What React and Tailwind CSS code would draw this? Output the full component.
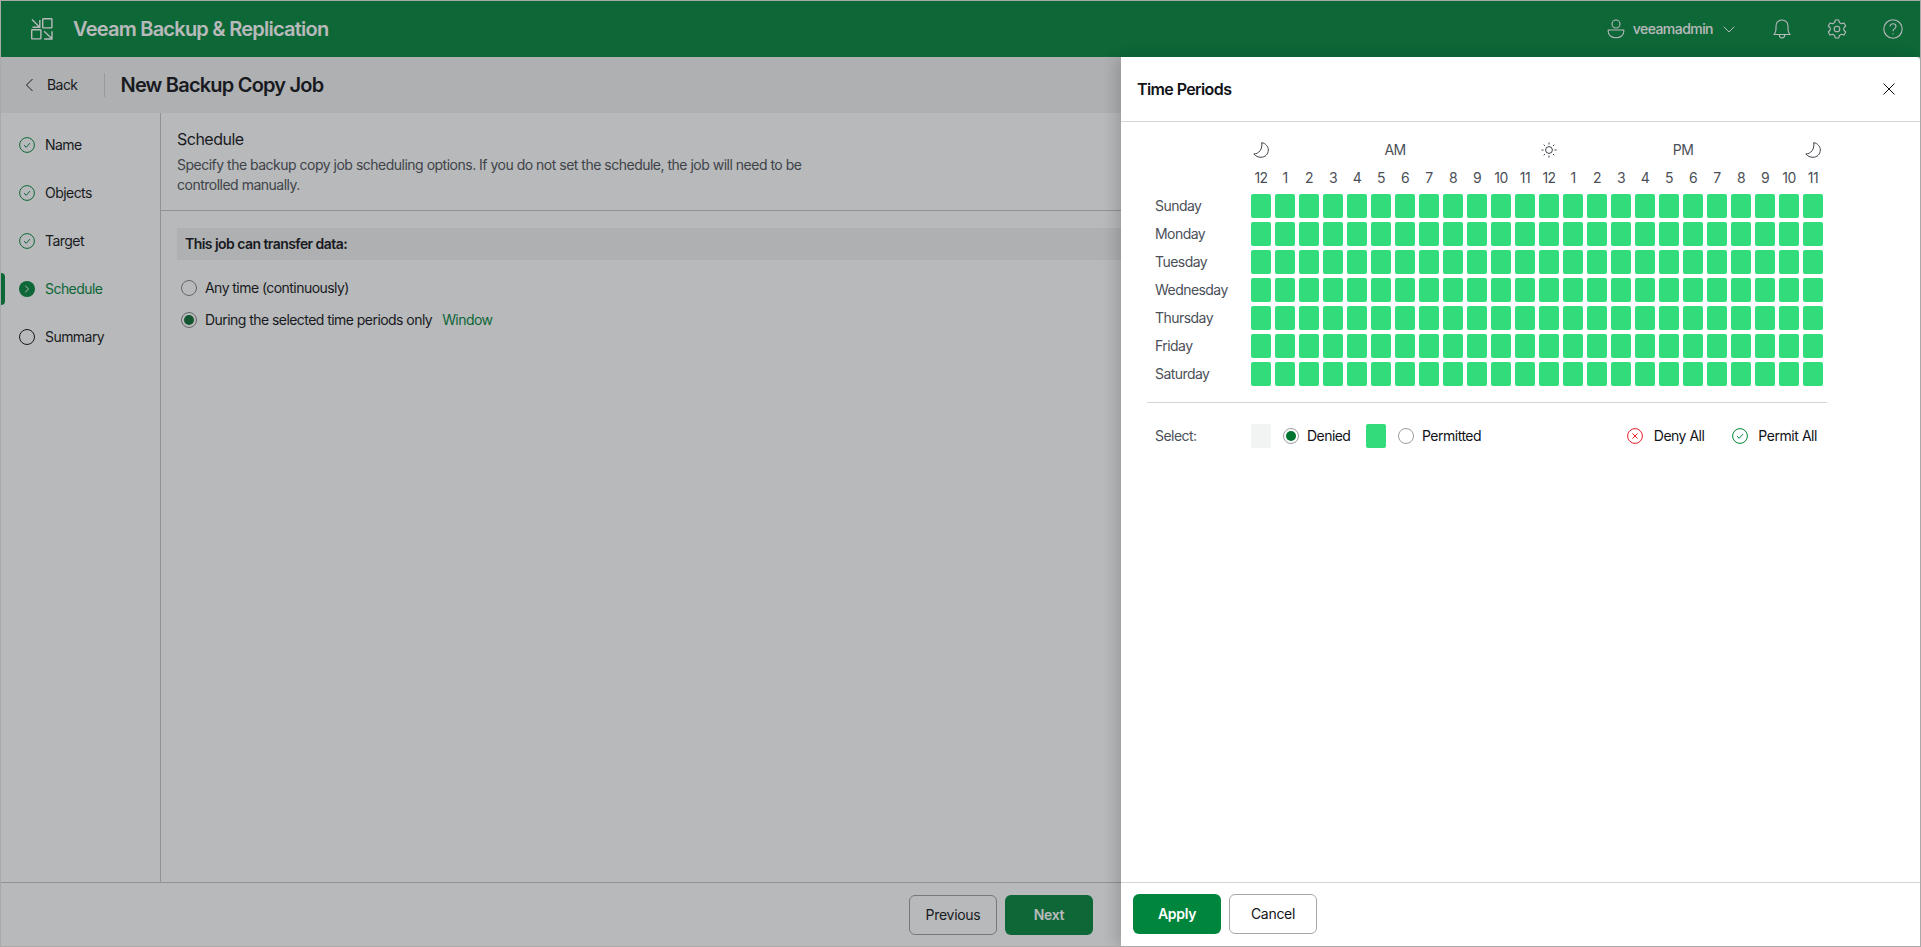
import React from "react";

const hours = [12, 1, 2, 3, 4, 5, 6, 7, 8, 9, 10, 11, 12, 1, 2, 3, 4, 5, 6, 7, 8, 9, 10, 11];
const days = ["Sunday", "Monday", "Tuesday", "Wednesday", "Thursday", "Friday", "Saturday"];

function Logo() {
  return (
    <svg width="24" height="24" viewBox="0 0 24 24" fill="none" stroke="currentColor" strokeWidth="1.4" className="text-white">
      <rect x="12.7" y="1.7" width="9.2" height="9.2" rx="0.6" />
      <rect x="1.7" y="12.7" width="9.2" height="9.2" rx="0.6" />
      <path d="M2 2.5 L9.4 9.9 M2.5 10.2 H9.8 V3" />
      <path d="M14.2 14.2 L21.8 21.8 M14.2 22 H22 V14.2" />
    </svg>
  );
}
function UserIcon() {
  return (
    <svg width="18" height="20" viewBox="0 0 18 20" fill="none" stroke="currentColor" strokeWidth="1.1">
      <circle cx="9" cy="5" r="4" />
      <path d="M1.2 11 H16.8 V12.5 C16.8 16 13.5 18.8 9 18.8 C4.5 18.8 1.2 16 1.2 12.5 Z" strokeLinejoin="round" />
    </svg>
  );
}
function Chevron() {
  return (
    <svg width="12" height="7" viewBox="0 0 12 7" fill="none" stroke="currentColor" strokeWidth="1">
      <path d="M0.7 0.7 L6 6 L11.3 0.7" />
    </svg>
  );
}
function Bell() {
  return (
    <svg width="18" height="20" viewBox="0 0 18 20" fill="none" stroke="currentColor" strokeWidth="1.1">
      <path d="M1 15.5 C2.6 14 3 12.5 3 10 V7 C3 3.6 5.6 1 9 1 C12.4 1 15 3.6 15 7 V10 C15 12.5 15.4 14 17 15.5 Z" strokeLinejoin="round" />
      <path d="M6.3 15.8 C6.3 17.6 7.4 19 9 19 C10.6 19 11.7 17.6 11.7 15.8" />
    </svg>
  );
}
function Gear() {
  return (
    <svg width="20" height="20" viewBox="0 0 20 20" fill="none" stroke="currentColor" strokeWidth="1.1" strokeLinejoin="round">
      <path d="M8.2 1 H11.8 L12.4 3.6 L14.4 4.7 L16.9 3.9 L18.7 7 L16.8 8.8 V11.2 L18.7 13 L16.9 16.1 L14.4 15.3 L12.4 16.4 L11.8 19 H8.2 L7.6 16.4 L5.6 15.3 L3.1 16.1 L1.3 13 L3.2 11.2 V8.8 L1.3 7 L3.1 3.9 L5.6 4.7 L7.6 3.6 Z" />
      <circle cx="10" cy="10" r="2.8" />
    </svg>
  );
}
function Help() {
  return (
    <svg width="20" height="20" viewBox="0 0 20 20" fill="none" stroke="currentColor" strokeWidth="1.1">
      <circle cx="10" cy="10" r="9.2" />
      <path d="M7 7.6 C7 5.9 8.3 4.8 10 4.8 C11.7 4.8 13 5.9 13 7.4 C13 9.6 10 9.6 10 12.2" />
      <circle cx="10" cy="14.9" r="0.7" fill="currentColor" stroke="none" />
    </svg>
  );
}
function Done() {
  return (
    <svg width="16" height="16" viewBox="0 0 16 16" fill="none">
      <circle cx="8" cy="8" r="7.4" stroke="#00853d" strokeWidth="1" />
      <path d="M5 8.2 L7.2 10.3 L11 6.1" stroke="#00853d" strokeWidth="1" />
    </svg>
  );
}
function Moon() {
  return (
    <svg width="16" height="16" viewBox="0 0 16 16" fill="none" stroke="#3f444b" strokeWidth="1" strokeLinejoin="round">
      <path d="M8.7 0.7 C12.6 1.3 15.3 4.3 15.3 8 C15.3 12.2 12 15.3 8 15.3 C5.3 15.3 2.6 14.2 0.8 11.9 C5.7 12.3 9.9 6.7 8.7 0.7 Z" />
    </svg>
  );
}
function Sun() {
  return (
    <svg width="16" height="16" viewBox="0 0 16 16" fill="none" stroke="#3f444b" strokeWidth="1">
      <circle cx="8" cy="8" r="3.4" />
      <path d="M8 0.5 V2.5 M8 13.5 V15.5 M0.5 8 H2.5 M13.5 8 H15.5 M2.7 2.7 L4 4 M12 12 L13.3 13.3 M2.7 13.3 L4 12 M12 4 L13.3 2.7" />
    </svg>
  );
}
function Radio({ checked, color = "#0b6b33", ring = "#80848a" }) {
  return (
    <span className="flex h-4 w-4 shrink-0 items-center justify-center rounded-full border bg-transparent" style={{ borderColor: ring }}>
      {checked && <span className="h-[10px] w-[10px] rounded-full" style={{ background: color }} />}
    </span>
  );
}
function Step({ label, state }) {
  return (
    <div className="relative flex h-12 items-center gap-[10px] pl-[18px]">
      {state === "active" && <span className="absolute left-0 top-2 h-8 w-1 rounded-r-sm bg-[#00853d]" />}
      {state === "done" && <Done />}
      {state === "active" && (
        <span className="flex h-4 w-4 items-center justify-center rounded-full bg-[#00853d]">
          <svg width="6" height="8" viewBox="0 0 6 8" fill="none" stroke="#fff" strokeWidth="1">
            <path d="M1.3 0.8 L4.6 4 L1.3 7.2" />
          </svg>
        </span>
      )}
      {state === "todo" && <span className="h-4 w-4 rounded-full border border-[#111318]" />}
      <span className={state === "active" ? "text-[#00853d]" : "text-[#111318]"}>{label}</span>
    </div>
  );
}

export default function App() {
  return (
    <div className="relative h-[947px] w-[1921px] overflow-hidden border border-[#a9a9a9] bg-white text-sm tracking-[-0.55px] font-['Inter',sans-serif] text-[#111318]">
      <div className="flex h-full flex-col">
        <header className="flex h-[56px] shrink-0 items-center bg-[#00853d] pl-[29px] pr-[17px] text-white">
          <Logo />
          <div className="ml-[19px] text-[20px] font-semibold tracking-[-0.76px]">Veeam Backup &amp; Replication</div>
          <div className="ml-auto flex items-center">
            <UserIcon />
            <span className="ml-2 font-medium">veeamadmin</span>
            <span className="ml-[10px]"><Chevron /></span>
            <span className="ml-[38px]"><Bell /></span>
            <span className="ml-[36px]"><Gear /></span>
            <span className="ml-[36px]"><Help /></span>
          </div>
        </header>
        <div className="flex h-[56px] shrink-0 items-center bg-[#f1f2f3] pl-[24px]">
          <svg width="9" height="14" viewBox="0 0 9 14" fill="none" stroke="#111318" strokeWidth="1">
            <path d="M7.5 1 L1.5 7 L7.5 13" />
          </svg>
          <span className="ml-[13px]">Back</span>
          <span className="ml-[26px] h-6 w-px bg-[#cfd1d3]" />
          <span className="ml-4 text-[20px] font-semibold tracking-[-0.8px]">New Backup Copy Job</span>
        </div>
        <div className="flex min-h-0 flex-1">
          <aside className="w-[160px] shrink-0 border-r border-[#c4c6c8] pt-2">
            <Step label="Name" state="done" />
            <Step label="Objects" state="done" />
            <Step label="Target" state="done" />
            <Step label="Schedule" state="active" />
            <Step label="Summary" state="todo" />
          </aside>
          <main className="min-w-0 flex-1">
            <div className="h-[98px] border-b border-[#c4c6c8] pl-4 pt-[14px]">
              <div className="text-base leading-6 tracking-[-0.5px]">Schedule</div>
              <div className="mt-[4px] w-[660px] leading-5 tracking-[-0.5px] text-[#4b5058]">
                Specify the backup copy job scheduling options. If you do not set the schedule, the job will need to be controlled manually.
              </div>
            </div>
            <div className="pl-4 pt-[17px]">
              <div className="flex h-8 items-center bg-[#f1f2f3] pl-2 font-semibold">This job can transfer data:</div>
              <div className="mt-3 flex h-8 items-center pl-1">
                <Radio />
                <span className="ml-2">Any time (continuously)</span>
              </div>
              <div className="flex h-8 items-center pl-1">
                <Radio checked />
                <span className="ml-2">During the selected time periods only</span>
                <span className="ml-[10px] text-[#00853d]">Window</span>
              </div>
            </div>
          </main>
        </div>
        <footer className="flex h-[64px] shrink-0 items-start justify-start gap-2 border-t border-[#c4c6c8] pl-[908px] pt-3">
          <button className="h-10 w-[88px] rounded-md border border-[#9a9da1] text-[#111318] tracking-[-0.3px]">Previous</button>
          <button className="h-10 w-[88px] rounded-md bg-[#00853d] font-semibold text-white tracking-[-0.3px]">Next</button>
        </footer>
      </div>

      {/* modal scrim */}
      <div className="absolute inset-0 bg-[#28292e]/[.33]" />

      {/* side panel */}
      <div className="absolute bottom-0 right-0 top-[56px] flex w-[799px] flex-col rounded-tr-sm bg-white shadow-[-6px_0_14px_rgba(0,0,0,0.15)]">
        <div className="flex h-[65px] shrink-0 items-center justify-between border-b border-[#d3d4d6] pl-4 pr-[25px]">
          <span className="text-base font-semibold tracking-[-0.6px] text-[#111318]">Time Periods</span>
          <svg width="12" height="12" viewBox="0 0 12 12" fill="none" stroke="#111318" strokeWidth="1">
            <path d="M0.5 0.5 L11.5 11.5 M11.5 0.5 L0.5 11.5" />
          </svg>
        </div>
        <div className="min-h-0 flex-1 pl-[26px] pt-[20px] text-[#4b5058]">
          <div className="w-[680px]">
            <div className="ml-[104px] grid h-4 w-[572px] grid-cols-[repeat(24,20px)] gap-x-1 leading-4">
              <span className="col-start-1 flex justify-center"><Moon /></span>
              <span className="col-span-2 col-start-6 text-center leading-4 w-[48px]">AM</span>
              <span className="col-start-13 flex justify-center"><Sun /></span>
              <span className="col-span-2 col-start-18 w-[48px] text-center leading-4">PM</span>
              <span className="col-start-24 flex justify-center"><Moon /></span>
            </div>
            <div className="ml-[104px] mt-[10px] grid h-5 grid-cols-[repeat(24,20px)] gap-x-1 leading-5">
              {hours.map((h, i) => (
                <span key={i} className="whitespace-nowrap text-center">{h}</span>
              ))}
            </div>
            <div className="mt-[6px] flex flex-col gap-1">
              {days.map((d) => (
                <div key={d} className="flex h-6 items-center pl-2">
                  <span className="w-[96px] shrink-0">{d}</span>
                  <div className="grid grid-cols-[repeat(24,20px)] gap-x-1">
                    {hours.map((_, i) => (
                      <span key={i} className="h-6 rounded-[2px] bg-[#32dc7b]" />
                    ))}
                  </div>
                </div>
              ))}
            </div>
            <div className="mt-4 flex h-[67px] items-center border-t border-[#d3d4d6] pl-2">
              <span className="w-[96px] shrink-0">Select:</span>
              <span className="h-6 w-5 rounded-[2px] bg-[#f2f3f3]" />
              <span className="ml-3"><Radio checked color="#00752f" ring="#9a9da1" /></span>
              <span className="ml-2 w-[59px] text-[#111318]">Denied</span>
              <span className="h-6 w-5 rounded-[2px] bg-[#32dc7b]" />
              <span className="ml-3"><Radio ring="#9a9da1" /></span>
              <span className="ml-2 tracking-[-0.5px] text-[#111318]">Permitted</span>
              <span className="ml-auto flex items-center gap-[11px] tracking-[-0.5px] text-[#111318]">
                <svg width="16" height="16" viewBox="0 0 16 16" fill="none" stroke="#e3202e" strokeWidth="1">
                  <circle cx="8" cy="8" r="7.4" />
                  <path d="M5.5 5.5 L10.5 10.5 M10.5 5.5 L5.5 10.5" />
                </svg>
                Deny All
              </span>
              <span className="ml-[28px] mr-[10px] flex items-center gap-[10px] tracking-[-0.45px] text-[#111318]"><Done />Permit All</span>
            </div>
          </div>
        </div>
        <div className="flex h-[64px] shrink-0 gap-2 border-t border-[#d3d4d6] pl-3 pt-[11px]">
          <button className="h-10 w-[88px] rounded-md bg-[#00853d] font-semibold text-white tracking-[-0.3px]">Apply</button>
          <button className="h-10 w-[88px] rounded-md border border-[#a4a7ab] text-[#111318] tracking-[-0.3px]">Cancel</button>
        </div>
      </div>
    </div>
  );
}
